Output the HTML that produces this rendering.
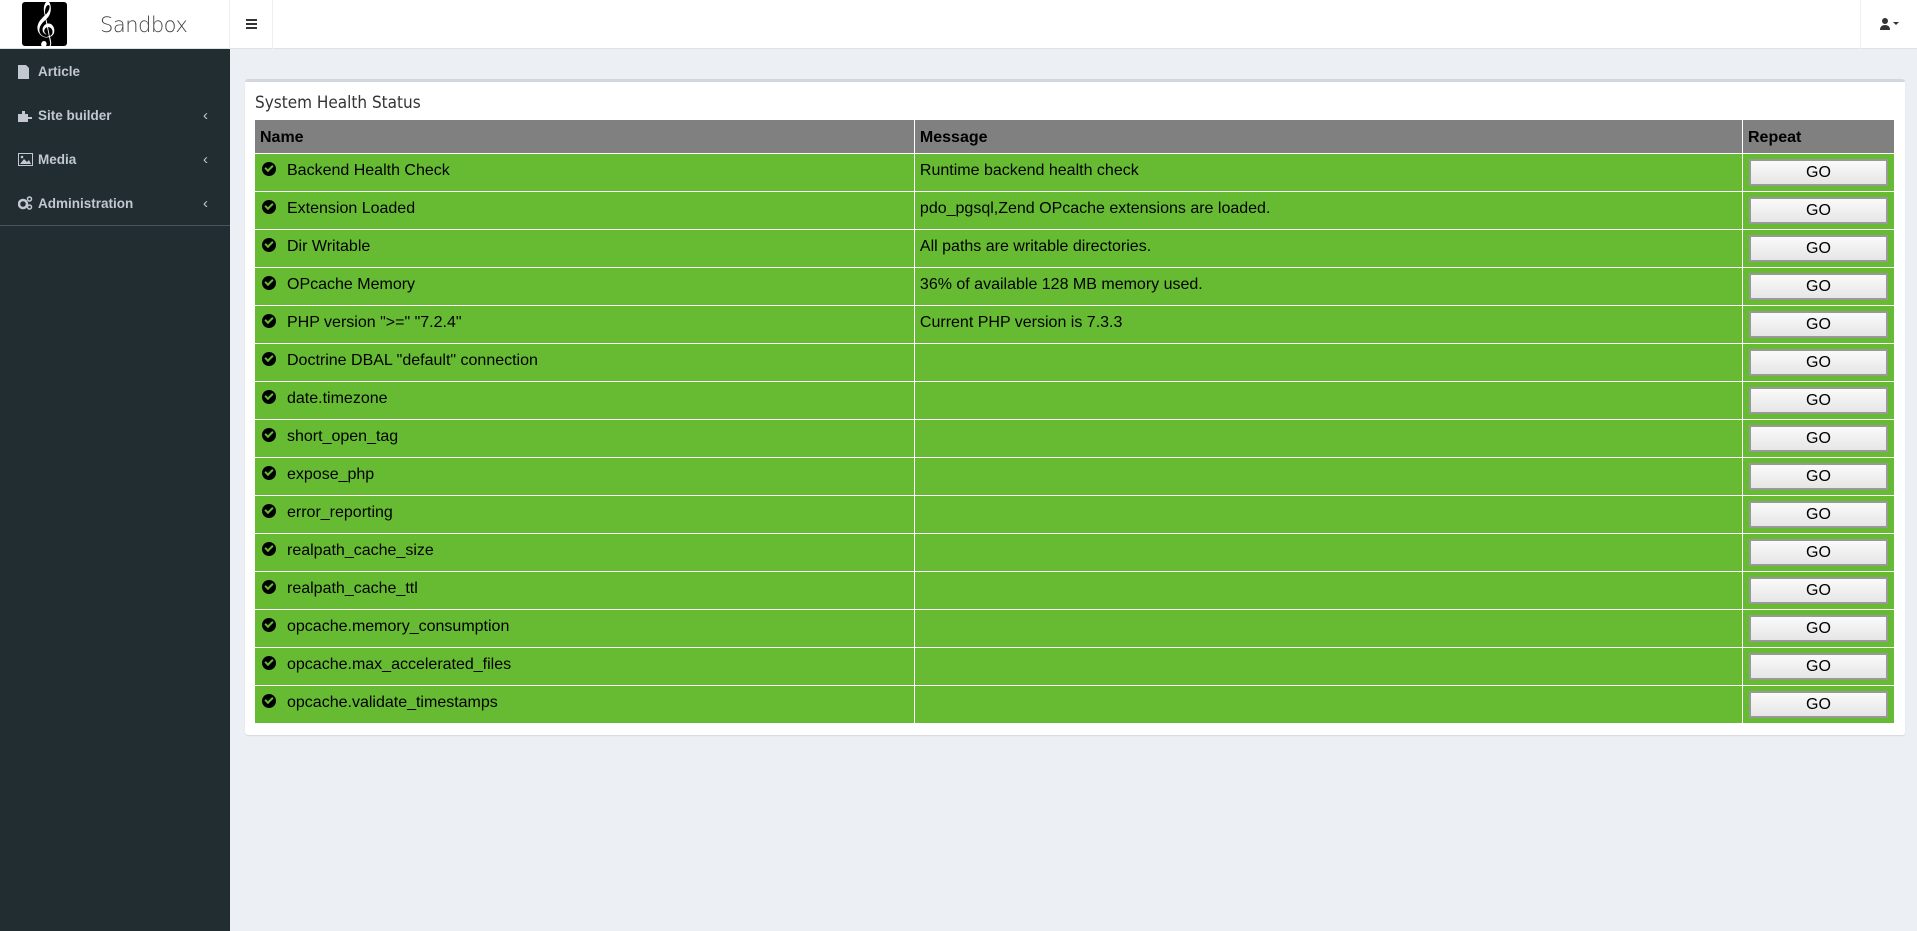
<!DOCTYPE html>
<html><head><meta charset="utf-8"><style>
*{box-sizing:border-box;margin:0;padding:0}
body{width:1917px;height:931px;background:#ecf0f5;font-family:"Liberation Sans",Arial,sans-serif;position:relative;overflow:hidden}
.top{position:absolute;left:0;top:0;width:1917px;height:49px;background:#fff;border-bottom:1px solid #dee2e6}
.logo{position:absolute;left:22px;top:2px;width:45px;height:44px;background:#000;border-radius:3px;color:#fff;font-size:40px;line-height:44px;text-align:center;font-family:"DejaVu Serif",serif}
.brand{position:absolute;left:100px;top:13px;font-size:21px;color:#444;font-weight:300;font-family:"DejaVu Sans",sans-serif;letter-spacing:-0.5px}
.ham{position:absolute;left:229px;top:0;width:44px;height:49px;border-left:1px solid #eee;border-right:1px solid #eee}
.ham i{position:absolute;left:16px;width:11px;height:2px;background:#333}
.usr{position:absolute;left:1860px;top:0;width:57px;height:49px;border-left:1px solid #eee}
.side{position:absolute;left:0;top:49px;width:230px;height:882px;background:#222d32}
.item{position:absolute;left:18px;color:#c2c7d0;font-size:13.5px;font-family:"Liberation Sans",sans-serif;font-weight:bold}
.item span{margin-left:20px}
.item b{position:absolute;left:185px;top:-1px;font-weight:normal;font-size:15px}
.sep{position:absolute;left:0;top:176px;width:230px;height:1px;background:#4b545c}
.card{position:absolute;left:245px;top:79px;width:1660px;height:656px;background:#fff;border-top:3px solid #d2d6de;border-radius:3px;box-shadow:0 1px 1px rgba(0,0,0,.1)}
.title{position:absolute;left:10px;top:11px;font-size:17px;color:#333;font-family:"DejaVu Sans Condensed","DejaVu Sans",sans-serif}
table{position:absolute;left:10px;top:38px;width:1639px;border-collapse:collapse;font-size:16px;color:#000}
th{background:#808080;text-align:left;height:33px;padding:4px 5px 0;font-weight:bold;border:1.5px solid #fff;border-top:0;vertical-align:middle}
td{background:#66bb33;height:38px;padding:8px 5px 0;vertical-align:top;border:1.5px solid #fff}
tr td:last-child{padding:5px 6px 0}
tr:last-child td{border-bottom:0}
th:first-child,td:first-child{border-left:0}
th:last-child,td:last-child{border-right:0}
.ck{display:inline-block;width:14px;height:14px;border-radius:50%;background:#000;position:relative;margin:0 11px 0 2px;vertical-align:-1px}
.ck:after{content:"";position:absolute;left:3px;top:3px;width:6px;height:3px;border-left:2.5px solid #66bb33;border-bottom:2.5px solid #66bb33;transform:rotate(-45deg)}
.go{display:block;width:139px;height:27px;background:linear-gradient(#fafafa,#e6e6e6);border:2px solid #999;text-align:center;font-size:16px;line-height:23px}
</style></head><body>
<div class="top">
<div class="logo">𝄞</div>
<div class="brand">Sandbox</div>
<div class="ham"><i style="top:19px"></i><i style="top:23px"></i><i style="top:27px"></i></div>
<div class="usr"><svg style="position:absolute;left:19px;top:18px" width="20" height="12" viewBox="0 0 20 12"><circle cx="5" cy="3" r="3" fill="#333"/><path d="M0 12 Q0 7 5 7 Q10 7 10 12Z" fill="#333"/><path d="M13 4 L19 4 L16 7Z" fill="#333"/></svg></div>
</div>
<div class="side">
<div class="item" style="top:15px"><svg style="position:absolute;top:1px" width="12" height="14"><path d="M0 0H8L11 3V14H0Z" fill="#c2c7d0"/></svg><span>Article</span></div>
<div class="item" style="top:59px"><svg style="position:absolute;top:1px" width="14" height="13"><path d="M0 5H4V2H7V5H10V8H14V10H10V13H0Z" fill="#c2c7d0"/></svg><span>Site builder</span><b>‹</b></div>
<div class="item" style="top:103px"><svg style="position:absolute;top:1px" width="15" height="13"><rect x="0.5" y="0.5" width="14" height="12" fill="none" stroke="#c2c7d0"/><path d="M2 11L6 6L9 9L11 7L13 11Z" fill="#c2c7d0"/><circle cx="4" cy="4" r="1.3" fill="#c2c7d0"/></svg><span>Media</span><b>‹</b></div>
<div class="item" style="top:147px"><svg style="position:absolute;top:0px" width="15" height="14"><circle cx="5" cy="8" r="4" fill="none" stroke="#c2c7d0" stroke-width="2.5"/><circle cx="11.5" cy="3" r="2" fill="none" stroke="#c2c7d0" stroke-width="1.5"/><circle cx="11.5" cy="11" r="2" fill="none" stroke="#c2c7d0" stroke-width="1.5"/></svg><span>Administration</span><b>‹</b></div>
<div class="sep"></div>
</div>
<div class="card">
<div class="title">System Health Status</div>
<table>
<colgroup><col style="width:660px"><col style="width:829px"><col style="width:150px"></colgroup>
<tr><th>Name</th><th>Message</th><th>Repeat</th></tr>
<tr><td><i class="ck"></i>Backend Health Check</td><td>Runtime backend health check</td><td><span class="go">GO</span></td></tr>
<tr><td><i class="ck"></i>Extension Loaded</td><td>pdo_pgsql,Zend OPcache extensions are loaded.</td><td><span class="go">GO</span></td></tr>
<tr><td><i class="ck"></i>Dir Writable</td><td>All paths are writable directories.</td><td><span class="go">GO</span></td></tr>
<tr><td><i class="ck"></i>OPcache Memory</td><td>36% of available 128 MB memory used.</td><td><span class="go">GO</span></td></tr>
<tr><td><i class="ck"></i>PHP version "&gt;=" "7.2.4"</td><td>Current PHP version is 7.3.3</td><td><span class="go">GO</span></td></tr>
<tr><td><i class="ck"></i>Doctrine DBAL "default" connection</td><td></td><td><span class="go">GO</span></td></tr>
<tr><td><i class="ck"></i>date.timezone</td><td></td><td><span class="go">GO</span></td></tr>
<tr><td><i class="ck"></i>short_open_tag</td><td></td><td><span class="go">GO</span></td></tr>
<tr><td><i class="ck"></i>expose_php</td><td></td><td><span class="go">GO</span></td></tr>
<tr><td><i class="ck"></i>error_reporting</td><td></td><td><span class="go">GO</span></td></tr>
<tr><td><i class="ck"></i>realpath_cache_size</td><td></td><td><span class="go">GO</span></td></tr>
<tr><td><i class="ck"></i>realpath_cache_ttl</td><td></td><td><span class="go">GO</span></td></tr>
<tr><td><i class="ck"></i>opcache.memory_consumption</td><td></td><td><span class="go">GO</span></td></tr>
<tr><td><i class="ck"></i>opcache.max_accelerated_files</td><td></td><td><span class="go">GO</span></td></tr>
<tr><td><i class="ck"></i>opcache.validate_timestamps</td><td></td><td><span class="go">GO</span></td></tr>
</table>
</div>
</body></html>
